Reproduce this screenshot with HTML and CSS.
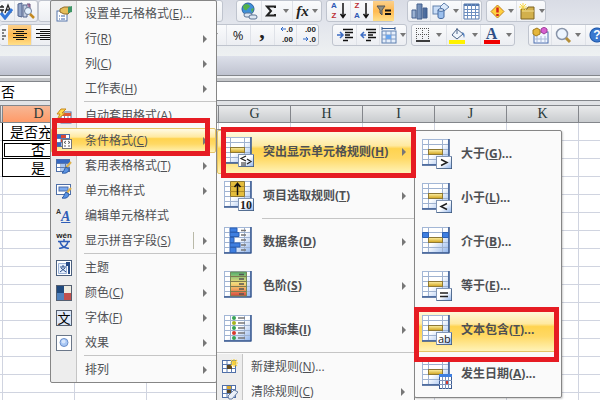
FILE: index.html
```html
<!DOCTYPE html>
<html lang="zh-CN">
<head>
    <meta charset="UTF-8">
    <meta name="viewport" content="width=device-width, initial-scale=1.0">
    <title>条件格式</title>
    <link rel="stylesheet" href="styles.css">
</head>
<body>
    <!-- Shared icon parts -->
    <svg class="defs" width="0" height="0" aria-hidden="true">
        <defs>
            <linearGradient id="paper" x1="0" y1="0" x2="1" y2="1">
                <stop offset="0.5" stop-color="#ffffff"/>
                <stop offset="1" stop-color="#8fb4ec"/>
            </linearGradient>
            <linearGradient id="gold" x1="0" y1="0" x2="0" y2="1">
                <stop offset="0" stop-color="#fff2a8"/>
                <stop offset="1" stop-color="#cfa21c"/>
            </linearGradient>
            <linearGradient id="steel" x1="0" y1="0" x2="1" y2="0">
                <stop offset="0" stop-color="#a9bedb"/>
                <stop offset="1" stop-color="#3d5f94"/>
            </linearGradient>
            <linearGradient id="scale" x1="0" y1="0" x2="0" y2="1">
                <stop offset="0" stop-color="#4fb06f"/>
                <stop offset="0.45" stop-color="#f2dd7c"/>
                <stop offset="0.7" stop-color="#f0a860"/>
                <stop offset="1" stop-color="#d8453c"/>
            </linearGradient>
            <symbol id="sheet" viewBox="0 0 30 30">
                <rect x="0.5" y="0.5" width="26" height="25" fill="url(#paper)" stroke="#a3b7d6"/>
                <path d="M6.500 1v24M20.500 1v24M1 5.500h26M1 10.500h26M1 15.500h26M1 20.500h26" fill="none" stroke="#9fb2d0"/>
                <path d="M27 0v26M0 26h27.500" stroke="#34568e" stroke-width="1.500"/>
            </symbol>
            <symbol id="rule" viewBox="0 0 30 30">
                <use href="#sheet" width="30" height="30"/>
                <rect x="6.500" y="10.500" width="14" height="5" fill="url(#gold)" stroke="#8d7836"/>
            </symbol>
            <symbol id="badge" viewBox="0 0 30 30">
                <rect x="14.500" y="17.500" width="15" height="12" fill="url(#paper)" stroke="#8296b5"/>
                <path d="M30 18v12H15" fill="none" stroke="#27466f"/>
            </symbol>
            <symbol id="mini" viewBox="0 0 16 16">
                <rect x="0.500" y="1.500" width="13" height="12" fill="#fff" stroke="#4f6fa8"/>
                <path d="M5 2v12M9.500 2v12M1 5.500h13M1 9.500h13" stroke="#5b7ab0"/>
            </symbol>
            <symbol id="arrow" viewBox="0 0 4 8"><path d="M0 0l4 4-4 4z" fill="#777"/></symbol>
            <symbol id="down" viewBox="0 0 6 4"><path d="M0 0h6L3 4z" fill="#777"/></symbol>
        </defs>
    </svg>

    <div class="window">
        <div class="toolbars">
            <div class="toolbar">
                <div class="group group-research">
                    <button class="tool cut" aria-label="拼写检查"><svg width="14" height="18" viewBox="0 0 14 18"><path d="M0 5h4M2 3v2M0 8h4M2 8v4M5 11l3-8 3 8M6 8h4" fill="none" stroke="#222" stroke-width="1.300"/><path d="M1 11l4 5 7-9" fill="none" stroke="#3477d8" stroke-width="3"/></svg></button>
                    <button class="tool w24" aria-label="信息检索"><svg width="18" height="18" viewBox="0 0 18 18"><path d="M1 2l4-1v14l-4-1z" fill="#94a6c8" stroke="#53658e"/><path d="M6 3h4v12H6z" fill="#c7d1e4" stroke="#53658e"/><path d="M10 2h3v7" fill="#b07aa0" stroke="#66537e"/><circle cx="11" cy="9" r="3.500" fill="#e5f2ff" stroke="#6b7b98"/><path d="M13 12l4 4" stroke="#c48a20" stroke-width="2.500"/></svg></button>
                </div>
                <div class="group group-hidden"><button class="tool w24" aria-label="更多"><svg class="down"><use href="#down"/></svg></button></div>
                <div class="group">
                    <button class="tool w25" aria-label="超链接"><svg width="18" height="18" viewBox="0 0 18 18"><circle cx="8" cy="7" r="6" fill="#3f8fd8" stroke="#2a5f9e"/><path d="M3 4c3-3 5-2 7 0-1 3-3 2-3 4-2 1-4-1-4-4M11 7l3-1-2 5z" fill="#54b24a"/><rect x="4" y="11" width="8" height="4" rx="2" fill="#dde6f2" stroke="#5c7494"/><rect x="9" y="13" width="8" height="4" rx="2" fill="#dde6f2" stroke="#5c7494"/></svg></button>
                    <button class="tool w32 spread" aria-label="自动求和"><svg width="12" height="12" viewBox="0 0 12 12"><path d="M10 3V1.500H2L6 6l-4 4.500h8V9" fill="none" stroke="#222" stroke-width="2"/></svg><svg class="down"><use href="#down"/></svg></button>
                    <button class="tool w30" aria-label="插入函数"><span class="fx">fx</span><svg class="down"><use href="#down"/></svg></button>
                </div>
                <div class="group group-sort">
                    <button class="tool w24" aria-label="升序"><span class="sort"><b class="blue">A</b><b class="red">Z</b></span><svg width="6" height="16" viewBox="0 0 6 16"><path d="M3 0v14M0.500 11L3 14.500 5.500 11" fill="none" stroke="#111" stroke-width="1.500"/></svg></button>
                    <button class="tool w24" aria-label="降序"><span class="sort"><b class="red">Z</b><b class="blue">A</b></span><svg width="6" height="16" viewBox="0 0 6 16"><path d="M3 0v14M0.500 11L3 14.500 5.500 11" fill="none" stroke="#111" stroke-width="1.500"/></svg></button>
                    <button class="tool w21 on" aria-label="筛选"><svg width="16" height="14" viewBox="0 0 16 14"><path d="M1 2h8L6 6v5L4 9V6z" fill="#8d8d83" stroke="#555"/><path d="M9 6.500h6M9 10h6" stroke="#111" stroke-width="2"/></svg></button>
                </div>
                <div class="group group-wide">
                    <button class="tool w23" aria-label="图表"><svg width="17" height="18" viewBox="0 0 17 18"><path d="M1 8h4v8H1zM6 2h5v15H6zM12 6h4v10h-4z" fill="url(#steel)" stroke="#45608e"/></svg></button>
                    <button class="tool w32" aria-label="形状"><svg width="18" height="18" viewBox="0 0 18 18"><rect x="1" y="4" width="9" height="8" fill="#c9ddf7" stroke="#6381ad"/><path d="M12 1l5 4-5 4-4-4z" fill="#dceafb" stroke="#6381ad"/><path d="M6 8h6v7c0 2-6 2-6 0z" fill="#9cc0ee" stroke="#44689e"/><ellipse cx="9" cy="8" rx="3" ry="1.300" fill="#eef6ff" stroke="#44689e"/></svg><svg class="down"><use href="#down"/></svg></button>
                    <button class="tool w21" aria-label="表格"><svg width="17" height="17" viewBox="0 0 17 17"><path d="M1 1h15v15H1z" fill="#fff" stroke="#5579ad"/><path d="M1 1h15v2H1z" fill="#5579ad"/><path d="M4.500 1v15M8.500 1v15M12.500 1v15M1 6.500h15M1 9.500h15M1 12.500h15" stroke="#6d8fc0"/></svg></button>
                </div>
                <div class="group group-sort">
                    <button class="tool w30" aria-label="错误检查"><svg width="15" height="15" viewBox="0 0 15 15"><path d="M7.500 1l6.500 6.500-6.500 6.500L1 7.500z" fill="#ffcf3f" stroke="#c48418"/><path d="M7.500 3.500v5M7.500 10v2" stroke="#d3251b" stroke-width="2.500"/></svg><svg class="down"><use href="#down"/></svg></button>
                    <button class="tool w30" aria-label="新建窗口"><svg width="18" height="17" viewBox="0 0 18 17"><path d="M3 6h6l1-2h6v12H3z" fill="#d2b04c" stroke="#7e6522"/><path d="M4 8h12" stroke="#f1dd92"/><path d="M5 0v8M1 4h8M2 1l6 6M8 1L2 7" stroke="#f8d84a"/></svg><svg class="down"><use href="#down"/></svg></button>
                </div>
            </div>
            <div class="toolbar">
                <div class="group group-align">
                    <button class="tool cut-small" aria-label="左对齐"><svg width="5" height="14" viewBox="0 0 5 14"><path d="M0 2h4M0 5h2M0 8h4M0 11h2" stroke="#111"/></svg></button>
                    <button class="tool w24 on" aria-label="居中"><svg width="14" height="14" viewBox="0 0 14 14"><path d="M0 1.500h14M3 3.500h8M0 5.500h14M3 7.500h8M0 9.500h14M3 11.500h8" stroke="#111"/></svg></button>
                    <button class="tool w24" aria-label="右对齐"><svg width="14" height="14" viewBox="0 0 14 14"><path d="M0 1.500h14M4 3.500h10M0 5.500h14M4 7.500h10M0 9.500h14M4 11.500h10" stroke="#111"/></svg></button>
                </div>
                <div class="group group-number">
                    <button class="tool w24" aria-label="货币"><svg class="down"><use href="#down"/></svg></button>
                    <button class="tool w25 percent">%</button>
                    <button class="tool w25 comma">,</button>
                    <button class="tool w23 decimals"><span><svg width="6" height="6" viewBox="0 0 6 6"><path d="M6 3H1M3 1L1 3l2 2" fill="none" stroke="#2f68c8"/></svg>.0</span><span>.00</span></button>
                    <button class="tool w23 decimals"><span>.00</span><span><svg width="6" height="6" viewBox="0 0 6 6"><path d="M0 3h5M3 1l2 2-2 2" fill="none" stroke="#2f68c8"/></svg>.0</span></button>
                </div>
                <div class="group group-wide">
                    <button class="tool w24" aria-label="减少缩进"><svg width="16" height="14" viewBox="0 0 16 14"><path d="M6 1.500h10M8 4.500h8M8 7h5M8 9.500h8M6 12.500h5" stroke="#111" stroke-width="1.500"/><path d="M0 7h5M3 4l3 3-3 3" fill="none" stroke="#3c6cc4" stroke-width="1.500"/></svg></button>
                    <button class="tool w24" aria-label="增加缩进"><svg width="16" height="14" viewBox="0 0 16 14"><path d="M6 1.500h10M8 4.500h8M8 7h5M8 9.500h8M6 12.500h5" stroke="#111" stroke-width="1.500"/><path d="M1 7h5M4 4L1 7l3 3" fill="none" stroke="#3c6cc4" stroke-width="1.500"/></svg></button>
                    <button class="tool w28" aria-label="单元格"><svg width="16" height="17" viewBox="0 0 16 17"><path d="M1 1.500h13M1 0v3M14 0v3" stroke="#345b91"/><rect x="1" y="4" width="14" height="12" fill="#e6effb" stroke="#5c7eae"/><path d="M5 4v12M10 4v12M1 8h14M1 12h14" stroke="#7e9ac4"/><rect x="5" y="8" width="5" height="4" fill="#69a5ed"/></svg><svg class="down"><use href="#down"/></svg></button>
                </div>
                <div class="group group-sort">
                    <button class="tool w35" aria-label="边框"><svg width="14" height="14" viewBox="0 0 14 14"><path d="M0.500 0v12M6.500 0v12M12.500 0v12M0 0.500h13M0 6.500h13" stroke="#555" stroke-dasharray="1 1"/><path d="M0 13h14" stroke="#000" stroke-width="1.500"/></svg><svg class="down gap"><use href="#down"/></svg></button>
                    <button class="tool w35" aria-label="填充颜色"><svg width="17" height="17" viewBox="0 0 17 17"><path d="M8 2l6 5-6 5-5-4z" fill="#eff5fc" stroke="#4b6387"/><path d="M8 7V1" stroke="#4b6387"/><path d="M13 5c3 1 3 4 2 6z" fill="#5986c4"/><path d="M0 13h16v4H0z" fill="#fff200"/></svg><svg class="down gap"><use href="#down"/></svg></button>
                    <button class="tool w35" aria-label="字体颜色"><span class="font-color">A</span><svg class="down gap"><use href="#down"/></svg></button>
                </div>
                <div class="group group-wide">
                    <button class="tool w23" aria-label="控件"><svg width="17" height="17" viewBox="0 0 17 17"><rect x="2" y="5" width="14" height="11" fill="#f1f6ff" stroke="#4d6fae"/><path d="M5 9v6M9 9v6M13 9v6M3 12h12" stroke="#a8b9d8"/><path d="M1 3l4-2 3 2v4L4 9 1 7z" fill="#e5b63c" stroke="#a17a1c"/><path d="M9 2l3-2 3 2v3l-3 2-3-2z" fill="#d65fd0" stroke="#9c3f98"/></svg></button>
                    <button class="tool w35" aria-label="显示比例"><svg width="17" height="17" viewBox="0 0 17 17"><circle cx="7" cy="7" r="5.500" fill="#eef6ff" stroke="#8894a9" stroke-width="1.500"/><path d="M11 11l4 4" stroke="#b58f3a" stroke-width="3"/></svg><svg class="down"><use href="#down"/></svg></button>
                    <button class="tool w24 help">?</button>
                </div>
            </div>
        </div>
        <div class="band"></div>
        <div class="formula-bar"><input class="formula" type="text" value="否" aria-label="编辑栏"></div>
        <div class="sheet">
            <table class="cells">
                <colgroup><col class="edge"><col><col><col><col><col><col><col><col><col class="rest"></colgroup>
                <thead>
                    <tr><th></th><th class="current">D</th><th></th><th></th><th>G</th><th>H</th><th>I</th><th>J</th><th>K</th><th></th></tr>
                </thead>
                <tbody>
                    <tr><td></td><td class="data title">是否充</td></tr>
                    <tr><td></td><td class="data selected">否</td></tr>
                    <tr><td></td><td class="data">是</td></tr>
                </tbody>
            </table>
        </div>

        <div class="menu menu-format" role="menu">
            <button class="item"><svg class="icon" viewBox="0 0 16 16"><rect x="1" y="5" width="10" height="10" fill="#fff" stroke="#5776ac"/><path d="M3 10h1M3 13h1M5 10h4M5 13h4" stroke="#3a62a8"/><path d="M4 3l4-2h6l2 3-4 4H8L4 6z" fill="#e5bd5a" stroke="#8f6a25"/><path d="M12 1l4-1v6l-4 1z" fill="#3f9465"/></svg><span>设置单元格格式(<u>E</u>)...</span></button>
            <button class="item"><span class="icon"></span><span>行(<u>R</u>)</span><svg class="arrow"><use href="#arrow"/></svg></button>
            <button class="item"><span class="icon"></span><span>列(<u>C</u>)</span><svg class="arrow"><use href="#arrow"/></svg></button>
            <button class="item"><span class="icon"></span><span>工作表(<u>H</u>)</span><svg class="arrow"><use href="#arrow"/></svg></button>
            <div class="line"></div>
            <button class="item"><svg class="icon" viewBox="0 0 16 16"><rect x="5" y="4" width="10" height="11" fill="#fff" stroke="#51699d"/><path d="M5 5h10v3H5z" fill="#e05b34"/><path d="M8.500 8v7M12 8v7M5 11.500h10" stroke="#6c86b8"/><path d="M5 1h5L6 5h3l-8 7 3-6H1z" fill="#ffdb4a" stroke="#c8881f"/></svg><span>自动套用格式(<u>A</u>)</span></button>
            <button class="item active"><svg class="icon" viewBox="0 0 16 16"><use href="#mini" width="16" height="16"/><path d="M1 2h4v3H1zM1 10h4v3H1z" fill="#3568c2"/><path d="M5 2h5v3H5zM5 6h4v3H5z" fill="#d84735"/><rect x="6.500" y="6.500" width="9" height="9" fill="#fff" stroke="#777"/><path d="M10 8l-2 1.500 2 1M12 8l2 1.500-2 1M8 13h2M12 13h2" fill="none" stroke="#333" stroke-width="0.800"/></svg><span>条件格式(<u>C</u>)</span><svg class="arrow"><use href="#arrow"/></svg></button>
            <button class="item"><svg class="icon" viewBox="0 0 16 16"><use href="#mini" width="16" height="16"/><path d="M1 2h13v3H1z" fill="#3568c2"/><path d="M5 6h4v3H5zM10 6h4v3h-4zM5 10h4v3H5z" fill="#a9c7f2"/><path d="M15 4l-6 7" stroke="#dfb24b" stroke-width="2"/><path d="M10 9l3 2c0 3-3 5-7 4 2-1 2-4 4-6" fill="#5a92e2" stroke="#2c5ba5"/></svg><span>套用表格格式(<u>T</u>)</span><svg class="arrow"><use href="#arrow"/></svg></button>
            <button class="item"><svg class="icon" viewBox="0 0 16 16"><rect x="0.500" y="1.500" width="14" height="10" fill="#fff" stroke="#4f6fa8"/><rect x="3" y="4" width="9" height="4" fill="#7aa9ee" stroke="#4f6fa8"/><path d="M15 5l-5 6" stroke="#dfb24b" stroke-width="2"/><path d="M10 9l3 2c0 3-3 5-7 4 2-1 2-4 4-6" fill="#5a92e2" stroke="#2c5ba5"/></svg><span>单元格样式</span><svg class="arrow"><use href="#arrow"/></svg></button>
            <button class="item"><span class="icon letters"><small>A</small><em>A</em></span><span>编辑单元格样式</span></button>
            <button class="item"><span class="icon pinyin"><small>wén</small><svg width="14" height="10" viewBox="0 0 14 10"><path d="M7 0v2M1 2.500h12M3 3c1 3 4 6 9 6.500M11 3c-1 3-4 6-9 6.500" fill="none" stroke="#2f5db8" stroke-width="1.500"/></svg></span><span>显示拼音字段(<u>S</u>)</span><span class="split"></span><svg class="arrow"><use href="#arrow"/></svg></button>
            <div class="line"></div>
            <button class="item"><svg class="icon" viewBox="0 0 16 16"><rect x="0.500" y="0.500" width="15" height="15" fill="#fff" stroke="#4b5f7d"/><path d="M2.500 3.500h8v10h-8z" fill="#e7f0fd" stroke="#9ab1d6"/><path d="M4 7h6M7 5v2M5 8l5 4M9 8l-5 4" fill="none" stroke="#264a86"/><path d="M10 2h4v12h-2V6h-2z" fill="#264a86"/></svg><span>主题</span><svg class="arrow"><use href="#arrow"/></svg></button>
            <button class="item"><svg class="icon" viewBox="0 0 16 16"><rect x="0.500" y="0.500" width="15" height="15" fill="#eeece1" stroke="#555f70"/><path d="M1 1h7v7H1z" fill="#1f497d"/><path d="M1 8h7v7H1z" fill="#4f81bd"/><path d="M8 8h7v7H8z" fill="#c0504d"/></svg><span>颜色(<u>C</u>)</span><svg class="arrow"><use href="#arrow"/></svg></button>
            <button class="item"><span class="icon glyph">文</span><span>字体(<u>F</u>)</span><svg class="arrow"><use href="#arrow"/></svg></button>
            <button class="item"><svg class="icon" viewBox="0 0 16 16"><rect x="0.500" y="0.500" width="15" height="15" fill="#fff" stroke="#6b7789"/><circle cx="8" cy="7.500" r="4" fill="#a9c8f5" stroke="#6c8fca"/><circle cx="7.500" cy="6.500" r="2" fill="#d5e5fc"/></svg><span>效果</span><svg class="arrow"><use href="#arrow"/></svg></button>
            <div class="line"></div>
            <button class="item"><span class="icon"></span><span>排列</span><svg class="arrow"><use href="#arrow"/></svg></button>
        </div>

        <div class="menu menu-rules" role="menu">
            <button class="item big active"><svg class="icon" viewBox="0 0 30 30"><use href="#rule"/><use href="#badge"/><path d="M22 19l-5 2.500 5 2.500M17 26h5M17 28h5M23 22l4 2.500-4 2.500" fill="none" stroke="#222" stroke-width="1.200"/></svg><span>突出显示单元格规则(<u>H</u>)</span><svg class="arrow"><use href="#arrow"/></svg></button>
            <button class="item big"><svg class="icon" viewBox="0 0 30 30"><use href="#sheet"/><path d="M6.500 0.500h14v15h-14z" fill="#e4bd3c" stroke="#8d7836"/><path d="M13.500 0v15M6 5.500h14M6 10.500h14" stroke="#b18c28"/><path d="M13.500 14V3M10.500 6l3-3.500 3 3.500" fill="none" stroke="#111" stroke-width="1.500"/><use href="#badge"/><text class="icon-number" x="16" y="28">10</text></svg><span>项目选取规则(<u>T</u>)</span><svg class="arrow"><use href="#arrow"/></svg></button>
            <div class="line"></div>
            <button class="item big"><svg class="icon" viewBox="0 0 30 30"><use href="#sheet"/><path d="M6 1h7v4H6zM6 5.500h9v4H6zM6 10.500h4v5H6zM6 16h10v4H6zM6 20.500h6v5H6z" fill="#3f7fe0" stroke="#2c61b5"/><path d="M17 3.500h5M17 8h5M17 13h5M17 18h5M17 23h5" stroke="#777" stroke-width="1.500"/></svg><span>数据条(<u>D</u>)</span><svg class="arrow"><use href="#arrow"/></svg></button>
            <button class="item big"><svg class="icon" viewBox="0 0 30 30"><use href="#sheet"/><path d="M6.500 1h16v24h-16z" fill="url(#scale)" stroke="#778a58"/><path d="M6 5.500h16M6 10.500h16M6 15.500h16M6 20.500h16" stroke="#7e7b50"/><path d="M15 3.500h5M15 8h5M15 13h5M15 18h5M15 23h5" stroke="#555" stroke-width="1.500"/></svg><span>色阶(<u>S</u>)</span><svg class="arrow"><use href="#arrow"/></svg></button>
            <button class="item big"><svg class="icon" viewBox="0 0 30 30"><use href="#sheet"/><g fill="#38a356"><circle cx="10" cy="3" r="2"/><circle cx="10" cy="13" r="2"/><circle cx="10" cy="23" r="2"/></g><circle cx="10" cy="8" r="2" fill="#a6b51f"/><circle cx="10" cy="18" r="2" fill="#d9372c"/><path d="M14 3h7M14 8h7M14 13h7M14 18h7M14 23h7" stroke="#777" stroke-width="1.500"/></svg><span>图标集(<u>I</u>)</span><svg class="arrow"><use href="#arrow"/></svg></button>
            <div class="line full"></div>
            <div class="manage">
                <button class="item"><svg class="icon" viewBox="0 0 16 16"><use href="#mini" width="16" height="16"/><path d="M5 6h5v4H5z" fill="#5a4520"/><path d="M12 0v8M8 4h8M9 1l6 6M15 1L9 7" stroke="#f6cf3a" stroke-width="1.200"/></svg><span>新建规则(<u>N</u>)...</span></button>
                <button class="item"><svg class="icon" viewBox="0 0 16 16"><use href="#mini" width="16" height="16"/><path d="M5 2h4v3H5z" fill="#d8a62c"/><path d="M5 6h4v3H5z" fill="#5a4520"/><path d="M6 12l6-6 4 2-6 7-3 0z" fill="#e9eff8" stroke="#6a7fa3"/></svg><span>清除规则(<u>C</u>)</span><svg class="arrow"><use href="#arrow"/></svg></button>
            </div>
        </div>

        <div class="menu menu-highlight" role="menu">
            <button class="item big"><svg class="icon" viewBox="0 0 30 30"><use href="#rule"/><use href="#badge"/><path d="M19 20.500l6 3-6 3" fill="none" stroke="#222" stroke-width="1.500"/></svg><span>大于(<u>G</u>)...</span></button>
            <button class="item big"><svg class="icon" viewBox="0 0 30 30"><use href="#rule"/><use href="#badge"/><path d="M25 20.500l-6 3 6 3" fill="none" stroke="#222" stroke-width="1.500"/></svg><span>小于(<u>L</u>)...</span></button>
            <button class="item big"><svg class="icon" viewBox="0 0 30 30"><use href="#rule"/><path d="M0.500 5.500h6v5h-6zM20.500 5.500h6v5h-6z" fill="#3f7fe0" stroke="#2c61b5"/></svg><span>介于(<u>B</u>)...</span></button>
            <button class="item big"><svg class="icon" viewBox="0 0 30 30"><use href="#rule"/><use href="#badge"/><path d="M18 22h8M18 25.500h8" stroke="#222" stroke-width="1.500"/></svg><span>等于(<u>E</u>)...</span></button>
            <button class="item big active"><svg class="icon" viewBox="0 0 30 30"><use href="#rule"/><use href="#badge"/><text class="icon-text" x="16" y="28">ab</text></svg><span>文本包含(<u>T</u>)...</span></button>
            <button class="item big"><svg class="icon" viewBox="0 0 30 30"><use href="#rule"/><rect x="17.500" y="15.500" width="12" height="14" fill="#fff" stroke="#3b5b92"/><path d="M17 15h13v3H17z" fill="#3f7fe0"/><path d="M20.500 18v12M23.500 18v12M26.500 18v12M17 21.500h13M17 25.500h13" stroke="#7f94ba"/><path d="M24 22h2v3h-2z" fill="#d9372c"/></svg><span>发生日期(<u>A</u>)...</span></button>
        </div>

        <div class="mark mark-format"></div>
        <div class="mark mark-rules"></div>
        <div class="mark mark-text"></div>
    </div>
</body>
</html>
```

FILE: styles.css
```css
* {
    box-sizing: border-box;
}

body {
    margin: 0;
    font-family: "Open Sans", "Noto Sans CJK SC", sans-serif;
    font-size: 12px;
    color: #4e5054;
}

button {
    font: inherit;
    color: inherit;
    background: none;
    border: none;
    padding: 0;
    margin: 0;
}

svg {
    flex: none;
}

.defs {
    position: absolute;
}

.window {
    position: relative;
    display: flex;
    flex-direction: column;
    height: 100vh;
    overflow: hidden;
    background: #fff;
}

/* Toolbars */
.toolbars {
    display: flex;
    flex-direction: column;
    gap: 2px;
    height: 56px;
    background: linear-gradient(#d9dce5, #e2e5ec 40%, #eef1f2);
}

.toolbar {
    display: flex;
    height: 22px;
}

.group {
    display: flex;
    flex: none;
    border: 1px solid #bfc4ce;
    border-radius: 3px;
    background: linear-gradient(#fafbfc, #eceef2);
}

.group-research {
    border-left: none;
}

.group-hidden {
    width: 185px;
    justify-content: flex-end;
    margin-right: 13px;
}

.group-sort {
    margin-left: 4px;
}

.group-wide {
    margin-left: 13px;
}

.group-align {
    border-left: none;
}

.group-number {
    margin-left: 147px;
}

.tool {
    display: flex;
    flex: none;
    align-items: center;
    justify-content: center;
    gap: 3px;
    margin: 0 -1px 0 0;
    border-right: 1px solid #dfe2e8;
}

.tool:last-child {
    border-right: none;
}

.tool.on {
    background: linear-gradient(#fbd08c, #ffb950 50%, #ffe08a);
}

.tool.spread {
    gap: 6px;
}

.cut { width: 15px; }
.cut-small { width: 9px; }
.w21 { width: 21px; }
.w23 { width: 23px; }
.w24 { width: 24px; }
.w25 { width: 25px; }
.w28 { width: 28px; }
.w30 { width: 30px; }
.w32 { width: 32px; }
.w35 { width: 35px; }

.down {
    width: 6px;
    height: 4px;
}

.down.gap {
    margin-left: 3px;
}

.fx {
    font: italic bold 15px/16px "Liberation Serif", serif;
    color: #222;
}

.sort {
    display: flex;
    flex-direction: column;
    font: 8px/10px "Liberation Sans", sans-serif;
}

.blue { color: #2d58b4; }
.red { color: #bd2f35; }

.percent {
    font-size: 13px;
    color: #222;
}

.comma {
    font: bold 22px/8px "Liberation Serif", serif;
    padding-bottom: 8px;
    color: #222;
}

.decimals {
    flex-direction: column;
    align-items: flex-end;
    gap: 0;
    padding-right: 3px;
    font: bold 8px/10px "Liberation Sans", sans-serif;
    color: #222;
}

.font-color {
    width: 16px;
    border-bottom: 4px solid #f00000;
    font: bold 16px/13px "Liberation Serif", serif;
    color: #2f4f86;
}

.help {
    font: bold 12px/14px "Liberation Sans", sans-serif;
    color: #fff;
    background: radial-gradient(circle, #3a78cf 6px, #1f57a8 7px, transparent 8px);
}

.band {
    height: 25px;
    border-bottom: 3px solid #c5c7ca;
    background: linear-gradient(#dde0ea, #bfc3d0 19px, #83868b 19px, #83868b 20px, #f0f1f3 20px);
}

.formula-bar {
    display: flex;
    height: 24px;
    border-bottom: 4px solid #e1e3e6;
}

.formula {
    flex: 1;
    min-width: 0;
    padding: 0 1px;
    border: 1px solid #83868b;
    border-width: 1px 0;
    font: 14px/18px "Noto Sans CJK SC", sans-serif;
    color: #000;
}

/* Worksheet */
.sheet {
    flex: 1;
    background:
        repeating-linear-gradient(90deg, #d0d4e0 0 1px, transparent 1px 72px) 2px 0,
        repeating-linear-gradient(#fff 0 17px, #d0d4e0 17px 18px);
}

.cells {
    width: 100%;
    table-layout: fixed;
    border-spacing: 0;
    border-collapse: separate;
}

.cells col { width: 72px; }
.cells .edge { width: 2px; }
.cells .rest { width: auto; }

.cells th {
    height: 18px;
    padding: 0;
    border: 1px solid #83868b;
    border-width: 1px 0 1px 1px;
    background: linear-gradient(#e9eaeb, #c9cccf);
    font: 14px/16px "Liberation Serif", serif;
    color: #263838;
}

.cells th.current {
    background: linear-gradient(#f6b795, #ff9a68);
}

.cells td {
    height: 18px;
    padding: 0;
}

.cells .data {
    border: 1px solid #000;
    border-width: 0 1px 1px 1px;
    background: #fff;
    font: 14px/17px "Noto Sans CJK SC", sans-serif;
    text-align: center;
    color: #000;
}

.cells .title {
    padding-left: 7px;
    text-align: left;
}

.cells .selected {
    outline: 1px solid #000;
    outline-offset: -3px;
}

/* Menus */
.menu {
    position: absolute;
    display: flex;
    flex-direction: column;
    border: 1px solid #868686;
    border-radius: 2px;
    background: #fafafa;
}

.menu-format {
    left: 50px;
    top: 0;
    width: 167px;
    background: linear-gradient(90deg, #ededed 25px, #c5c5c5 25px, #c5c5c5 26px, #fafafa 26px);
}

.menu-rules {
    left: 216px;
    top: 129px;
    width: 199px;
}

.menu-highlight {
    left: 414px;
    top: 130px;
    width: 148px;
    padding: 1px 3px 1px 0;
    box-shadow: 1px 1px 2px rgba(0, 0, 0, 0.2);
}

.item {
    display: flex;
    align-items: center;
    height: 25px;
    padding: 0 9px 0 5px;
    line-height: 16px;
    text-align: left;
    white-space: nowrap;
}

.item .icon {
    flex: none;
    width: 16px;
    height: 16px;
    margin-right: 13px;
}

.item .arrow {
    width: 4px;
    height: 8px;
    margin-left: auto;
}

.item u {
    text-underline-offset: 1px;
}

.item.active {
    border: 1px solid #e5c365;
    border-radius: 2px;
    padding: 0 8px 0 4px;
    background: linear-gradient(#fffbe6, #ffe9a0 35%, #ffd34f 42%, #ffd965 65%, #fff3b8);
}

.item.big {
    height: 44px;
    padding: 0 8px 0 7px;
    font-weight: bold;
}

.item.big .icon {
    width: 30px;
    height: 30px;
    margin-right: 9px;
}

.item.big.active {
    padding: 0 7px 0 6px;
}

.line {
    height: 2px;
    margin-left: 33px;
    border-top: 1px solid #c5c5c5;
}

.menu-rules .line {
    margin-left: 45px;
}

.menu-rules .line.full {
    margin-left: 0;
}

.manage {
    display: flex;
    flex-direction: column;
    background: linear-gradient(90deg, #ededed 25px, #c5c5c5 25px, #c5c5c5 26px, #fafafa 26px);
}

.split {
    width: 1px;
    height: 17px;
    margin-left: auto;
    background: #b9b9a8;
}

.split + .arrow {
    margin-left: 9px;
}

.icon.letters {
    display: flex;
    align-items: flex-end;
    color: #333;
}

.letters small {
    align-self: flex-start;
    font: bold 7px/8px "Liberation Sans", sans-serif;
}

.letters em {
    font: italic bold 14px/14px "Liberation Serif", serif;
    color: #2f5db8;
    text-decoration: underline;
}

.icon.pinyin {
    display: flex;
    flex-direction: column;
    align-items: center;
}

.pinyin small {
    font: bold 8px/6px "Liberation Sans", sans-serif;
    color: #222;
}

.icon.glyph {
    border: 1px solid #555f70;
    background: #dfe7f6;
    font: 13px/14px "Noto Sans CJK SC", sans-serif;
    color: #000;
    text-align: center;
}

.icon-number {
    font: bold 12px "Liberation Serif", serif;
    fill: #222;
}

.icon-text {
    font: 11px "Open Sans", sans-serif;
    fill: #222;
}

/* Red frames around the steps */
.mark {
    position: absolute;
    border: 5px solid #e61c23;
    pointer-events: none;
}

.mark-format {
    left: 52px;
    top: 118px;
    width: 158px;
    height: 38px;
}

.mark-rules {
    left: 221px;
    top: 127px;
    width: 195px;
    height: 51px;
}

.mark-text {
    left: 414px;
    top: 307px;
    width: 145px;
    height: 55px;
}
```
